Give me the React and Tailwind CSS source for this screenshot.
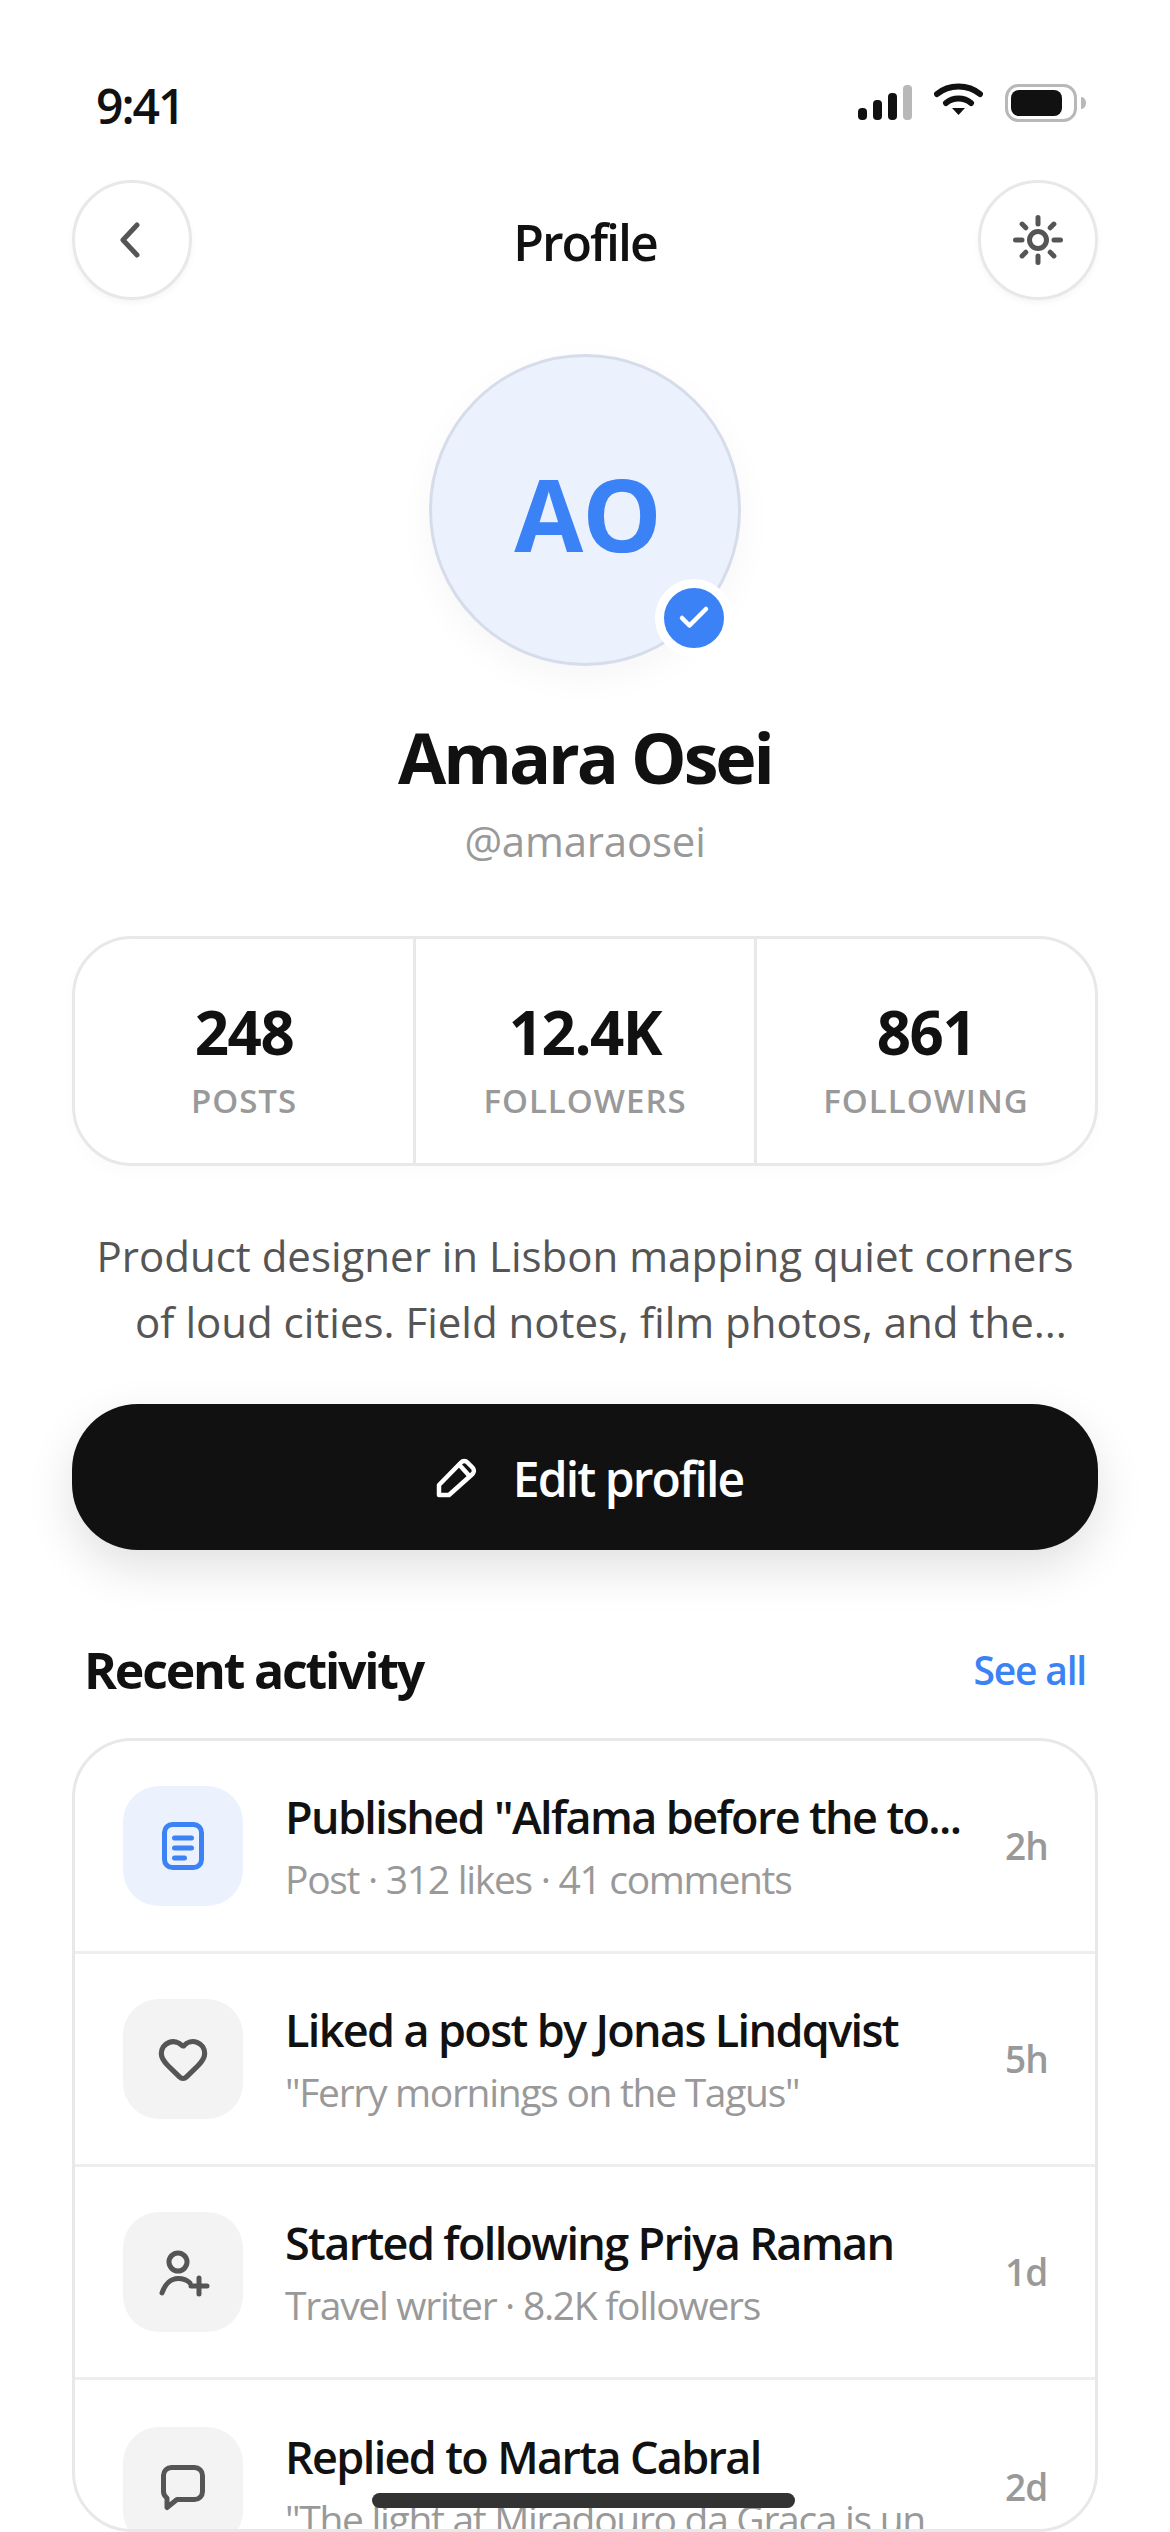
import React from "react";
import { Heart, Check } from "lucide-react";

const font = { fontFamily: '"Open Sans", "Noto Sans", sans-serif' };

function BackIcon() {
  return (
    <svg width="60" height="60" viewBox="0 0 60 60" fill="none" stroke="#555" strokeWidth="5" strokeLinecap="round" strokeLinejoin="round">
      <path d="M35 15L21 30L35 45" />
    </svg>
  );
}
function SunIcon() {
  return (
    <svg width="60" height="60" viewBox="0 0 60 60" fill="none" stroke="#555" strokeWidth="5" strokeLinecap="round">
      <circle cx="30" cy="30" r="8.5" />
      <path d="M30 7.5V14M30 46V52.5M7.5 30H14M46 30H52.5M14.1 14.1L17.8 17.8M42.2 42.2L45.9 45.9M14.1 45.9L17.8 42.2M42.2 17.8L45.9 14.1" />
    </svg>
  );
}
function PencilIcon() {
  return (
    <svg width="48" height="48" viewBox="0 0 48 48" fill="none" stroke="#fff" strokeWidth="4.5" strokeLinecap="round" strokeLinejoin="round">
      <path d="M6 42V32L28 9.5a4.5 4.5 0 0 1 6.5 0l5 5a4.5 4.5 0 0 1 0 6.5L16 42Z" />
      <path d="M26.5 12L36.5 23" />
    </svg>
  );
}
function DocIcon() {
  return (
    <svg width="60" height="60" viewBox="0 0 60 60" fill="none" stroke="#3b82f6" strokeWidth="5" strokeLinecap="round">
      <rect x="11.5" y="8.5" width="37" height="43" rx="8" />
      <path d="M21.5 22H38.5M21.5 32H38.5M21.5 42H31.5" />
    </svg>
  );
}
function UserPlusIcon() {
  return (
    <svg width="60" height="60" viewBox="0 0 60 60" fill="none" stroke="#555" strokeWidth="5" strokeLinecap="round" strokeLinejoin="round">
      <circle cx="25" cy="20" r="9" />
      <path d="M9 51C12 42 18 36.5 25 36.5C30 36.5 34 38 37 41" />
      <path d="M46 36V52M38 44H54" />
    </svg>
  );
}
function MessageIcon() {
  return (
    <svg width="60" height="60" viewBox="0 0 60 60" fill="none" stroke="#555" strokeWidth="5" strokeLinecap="round" strokeLinejoin="round">
      <path d="M18.5 10.5H41.5a8 8 0 0 1 8 8v16a8 8 0 0 1-8 8H24l-10 8v-9.5a8 8 0 0 1-3.5-6.5v-16a8 8 0 0 1 8-8Z" />
    </svg>
  );
}

function Stat({ value, label, border }) {
  return (
    <div className={`flex-1 flex flex-col items-center justify-center pt-[16px] ${border ? "border-l-[3px] border-[#e8e8e8]" : ""}`}>
      <div className="text-[60px] leading-[72px] font-bold text-[#111] tracking-[-1.5px]">{value}</div>
      <div className="mt-[12px] text-[33px] leading-[42px] font-semibold text-[#999] tracking-[1px]">{label}</div>
    </div>
  );
}

function Row({ icon, blue, title, sub, time, last }) {
  return (
    <div className={`h-[213px] shrink-0 flex items-center pl-[48px] pr-[48px] ${last ? "" : "border-b-[3px] border-[#eeeeee]"}`}>
      <div className={`w-[120px] h-[120px] rounded-[36px] shrink-0 flex items-center justify-center ${blue ? "bg-[#ebf1fd]" : "bg-[#f3f3f3]"}`}>
        {icon}
      </div>
      <div className="ml-[42px] flex-1 min-w-0 whitespace-nowrap">
        <div className="text-[45px] leading-[60px] font-semibold text-[#111] tracking-[-1.65px]">{title}</div>
        <div className="mt-[5px] text-[39px] leading-[54px] text-[#999] tracking-[-1.3px]">{sub}</div>
      </div>
      <div className="ml-[40px] w-[42px] text-right text-[37px] font-semibold text-[#999] tracking-[-0.8px] shrink-0">{time}</div>
    </div>
  );
}

export default function App() {
  return (
    <div style={font} className="relative w-[1170px] h-[2532px] overflow-hidden bg-white flex flex-col">
      <div className="h-[180px] shrink-0 flex justify-between items-start pl-[96px] pr-[84px] pt-[78px]">
        <div className="text-[48px] leading-[56px] font-semibold text-[#111] tracking-[-2px]">9:41</div>
        <div className="flex items-start gap-[22px] pt-[5px]">
          <svg className="mt-[2px]" width="54" height="35" viewBox="0 0 54 35"><rect x="0" y="23" width="9" height="12" rx="4" fill="#111"/><rect x="15" y="15" width="9" height="20" rx="4" fill="#111"/><rect x="30" y="8" width="9" height="27" rx="4" fill="#111"/><rect x="45" y="0" width="9" height="35" rx="4" fill="#b8b8b8"/></svg>
          <svg width="49" height="32" viewBox="0 0 49 32" fill="none"><path d="M3 11C15 1 34 1 46 11" stroke="#111" strokeWidth="6" strokeLinecap="round"/><path d="M12 20C19 14 30 14 37 20" stroke="#111" strokeWidth="6" strokeLinecap="round"/><path d="M18 25H31L24.5 32Z" fill="#111"/></svg>
          <svg className="mt-[1px]" width="81" height="38" viewBox="0 0 81 38" fill="none"><rect x="1.5" y="1.5" width="69" height="35" rx="12" stroke="#b8b8b8" strokeWidth="3"/><rect x="6" y="6" width="51" height="26" rx="8" fill="#111"/><path d="M76 13c3 0 5 3 5 6s-2 6-5 6Z" fill="#b8b8b8"/></svg>
        </div>
      </div>

      <div className="h-[120px] shrink-0 mx-[72px] flex items-center justify-between">
        <div className="w-[120px] h-[120px] rounded-full border-[3px] border-[#e8e8e8] flex items-center justify-center shadow-[0_3px_6px_rgba(0,0,0,0.04)]">
          <BackIcon />
        </div>
        <div className="pt-[4px] text-[50px] font-semibold text-[#111] tracking-[-2px]">Profile</div>
        <div className="w-[120px] h-[120px] rounded-full border-[3px] border-[#e8e8e8] flex items-center justify-center shadow-[0_3px_6px_rgba(0,0,0,0.04)]">
          <SunIcon />
        </div>
      </div>

      <div className="mt-[54px] flex flex-col items-center shrink-0">
        <div className="relative w-[312px] h-[312px] rounded-full bg-[#ebf1fd] border-[3px] border-[#d6dcea] flex items-center justify-center shadow-[0_12px_36px_rgba(0,0,0,0.04)]">
          <span className="pt-[6px] pl-[5px] text-[100px] font-bold text-[#3b82f6] tracking-[-1px]">AO</span>
          <div className="absolute right-[5px] bottom-[6px] w-[78px] h-[78px] rounded-full bg-[#3b82f6] border-[9px] border-white flex items-center justify-center box-border">
            <Check size={36} color="#fff" strokeWidth={3} />
          </div>
        </div>
        <div className="mt-[49px] text-[70px] leading-[84px] font-bold text-[#111] tracking-[-3.1px]">Amara Osei</div>
        <div className="mt-[15px] text-[42px] leading-[54px] text-[#999] tracking-[-0.2px]">@amaraosei</div>
      </div>

      <div className="mt-[68px] mx-[72px] h-[230px] shrink-0 rounded-[60px] border-[3px] border-[#e8e8e8] flex shadow-[0_6px_18px_rgba(0,0,0,0.02)]">
        <Stat value="248" label="POSTS" />
        <Stat value="12.4K" label="FOLLOWERS" border />
        <Stat value="861" label="FOLLOWING" border />
      </div>

      <div className="mt-[57px] text-center text-[42px] leading-[66px] text-[#555] shrink-0 whitespace-nowrap">
        <div>Product designer in Lisbon mapping quiet corners</div>
        <div className="pl-[32px]">of loud cities. Field notes, film photos, and the...</div>
      </div>

      <div className="mt-[49px] mx-[72px] h-[146px] pl-[6px] shrink-0 rounded-[66px] bg-[#111] flex items-center justify-center gap-[32px] shadow-[0_18px_48px_rgba(0,0,0,0.12)]">
        <PencilIcon />
        <span className="pt-[4px] text-[48px] font-semibold text-white tracking-[-1.9px]">Edit profile</span>
      </div>

      <div className="mt-[87px] mx-[84px] h-[66px] flex items-center justify-between shrink-0">
        <span className="text-[50px] leading-[66px] font-bold text-[#111] tracking-[-2.2px]">Recent activity</span>
        <span className="text-[39px] font-semibold text-[#3b82f6] tracking-[-1.2px]">See all</span>
      </div>

      <div className="mt-[35px] mx-[72px] h-[794px] shrink-0 rounded-[60px] border-[3px] border-[#e8e8e8] overflow-hidden flex flex-col">
        <Row blue icon={<DocIcon />} title={'Published "Alfama before the to...'} sub="Post · 312 likes · 41 comments" time="2h" />
        <Row icon={<Heart size={52} color="#555" strokeWidth={2.4} />} title="Liked a post by Jonas Lindqvist" sub={'"Ferry mornings on the Tagus"'} time="5h" />
        <Row icon={<UserPlusIcon />} title="Started following Priya Raman" sub="Travel writer · 8.2K followers" time="1d" />
        <Row last icon={<MessageIcon />} title="Replied to Marta Cabral" sub={'"The light at Miradouro da Graca is un...'} time="2d" />
      </div>

      <div className="absolute left-[372px] top-[2493px] w-[423px] h-[15px] rounded-full bg-[#333]" />
    </div>
  );
}
